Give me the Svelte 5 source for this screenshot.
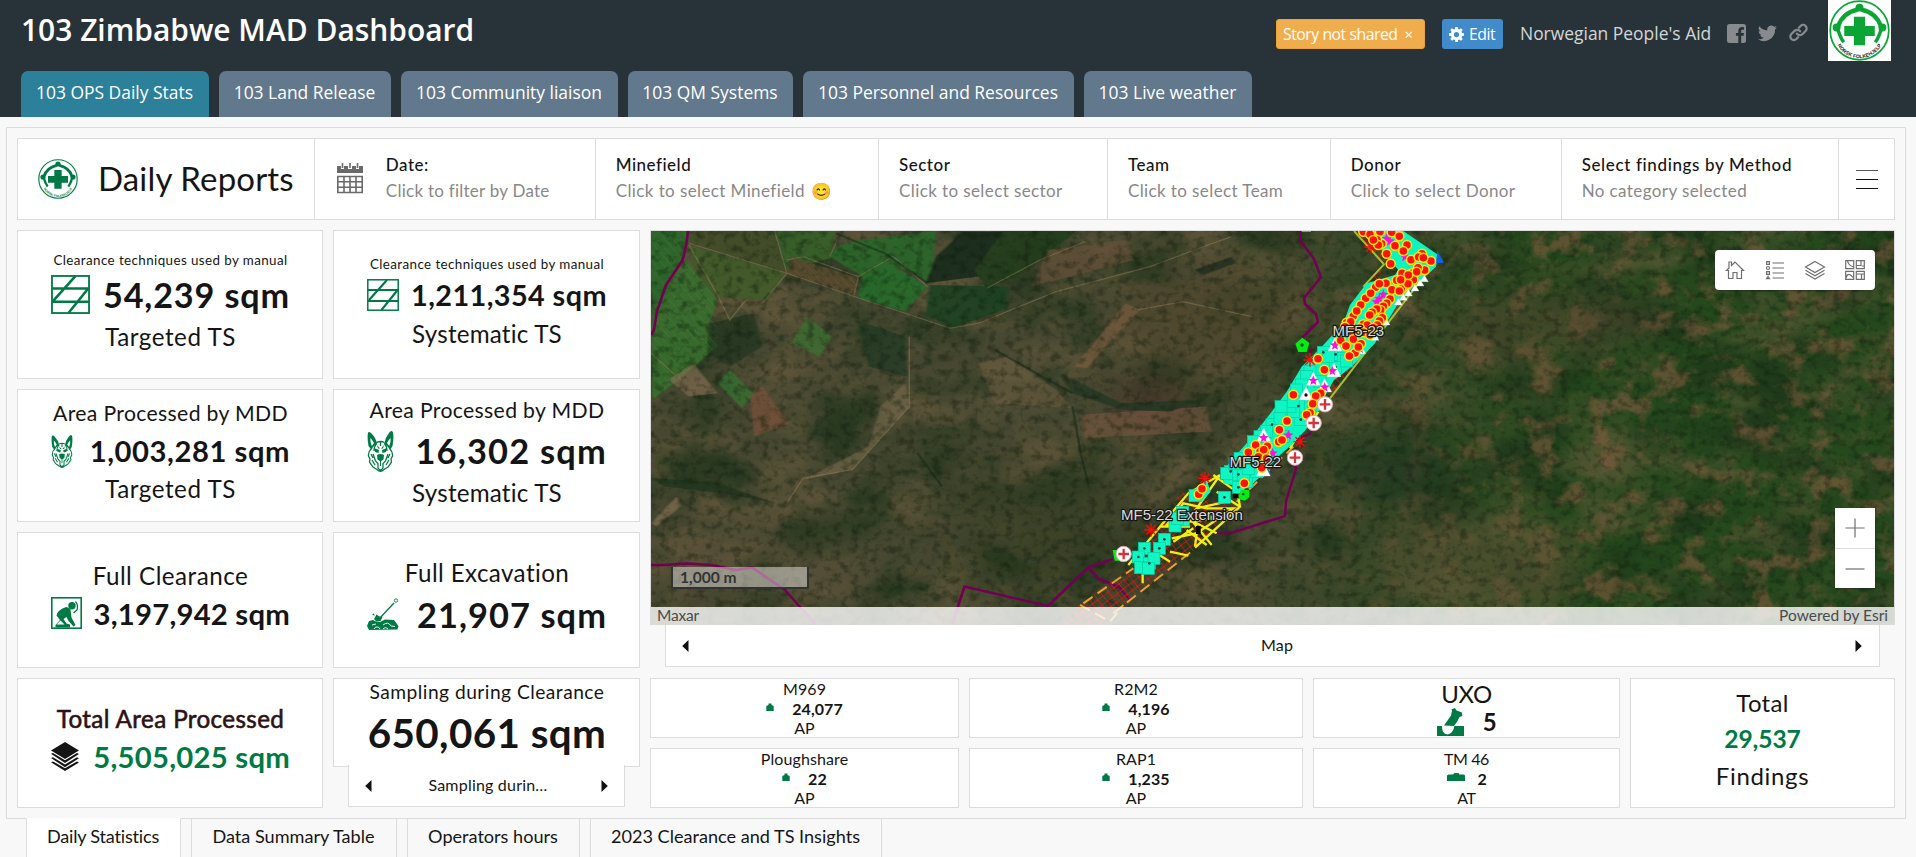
<script>
  const storyTabs = [
    { label: '103 OPS Daily Stats', w: 188, active: true },
    { label: '103 Land Release', w: 172 },
    { label: '103 Community liaison', w: 217 },
    { label: '103 QM Systems', w: 165 },
    { label: '103 Personnel and Resources', w: 271 },
    { label: '103 Live weather', w: 168 }
  ];

  const filters = [
    { name: 'Minefield', hint: 'Click to select Minefield', w: 283.5, emoji: true },
    { name: 'Sector', hint: 'Click to select sector', w: 229 },
    { name: 'Team', hint: 'Click to select Team', w: 223 },
    { name: 'Donor', hint: 'Click to select Donor', w: 231 },
    { name: 'Select findings by Method', hint: 'No category selected', w: 277 }
  ];

  // t: text, s: font size, ls: letter spacing, mt: space above
  const columns = [
    [
      { h: 149, icon: 'hatch', iw: 39, ih: 39, top: { t: 'Clearance techniques used by manual', s: 13.4, ls: 0.4, mt: 21 }, val: { t: '54,239 sqm', s: 34.2, ls: 0.85, mt: 6 }, bot: { t: 'Targeted TS', s: 24.2, ls: 0.54, mt: 6.5 } },
      { h: 133, icon: 'dog', iw: 22, ih: 34, top: { t: 'Area Processed by MDD', s: 21.2, ls: 0.34, mt: 11 }, val: { t: '1,003,281 sqm', s: 29.2, ls: 0.55, mt: 7 }, bot: { t: 'Targeted TS', s: 24.2, ls: 0.54, mt: 6 } },
      { h: 136, icon: 'kneel', iw: 31, ih: 32, top: { t: 'Full Clearance', s: 24.2, ls: 0.49, mt: 27.5 }, val: { t: '3,197,942 sqm', s: 29.3, ls: 0.2, mt: 6 } },
      { h: 130, icon: 'stack', iw: 28, ih: 29, tone: 'total', top: { t: 'Total Area Processed', s: 24.2, ls: 0.38, mt: 25 }, val: { t: '5,505,025 sqm', s: 29.3, ls: 0.22, mt: 5.5 } }
    ],
    [
      { h: 149, icon: 'hatch', iw: 32, ih: 32, top: { t: 'Clearance techniques used by manual', s: 13.4, ls: 0.4, mt: 25 }, val: { t: '1,211,354 sqm', s: 28.8, ls: 0.42, mt: 6 }, bot: { t: 'Systematic TS', s: 24.2, ls: 0.2, mt: 6 } },
      { h: 133, icon: 'dog', iw: 27, ih: 42, top: { t: 'Area Processed by MDD', s: 21.2, ls: 0.34, mt: 7.5 }, val: { t: '16,302 sqm', s: 34.4, ls: 1.2, mt: 7 }, bot: { t: 'Systematic TS', s: 24.2, ls: 0.2, mt: 7 } },
      { h: 136, icon: 'digger', iw: 32, ih: 32, top: { t: 'Full Excavation', s: 24.2, ls: 0.39, mt: 25 }, val: { t: '21,907 sqm', s: 34.4, ls: 1.05, mt: 6.5 } },
      { h: 89, top: { t: 'Sampling during Clearance', s: 19.2, ls: 0.48, mt: 1 }, val: { t: '650,061 sqm', s: 40.4, ls: 0.4, mt: 5.5 } }
    ]
  ];

  const mines = [
    { w: 309, items: [{ t: 'M969', v: '24,077', f: 'AP' }, { t: 'Ploughshare', v: '22', f: 'AP' }] },
    { w: 334, items: [{ t: 'R2M2', v: '4,196', f: 'AP' }, { t: 'RAP1', v: '1,235', f: 'AP' }] }
  ];

  const sheets = ['Data Summary Table', 'Operators hours', '2023 Clearance and TS Insights'];
  const sheetWidths = [206, 173, 292];

  const mineDots = [
    [850,20],[870,28],[900,20],[935,22],[958,34],[905,56],[891,44],[981,60],[920,86],[970,78],[1026,86],[932,116],[993,104],[1053,108],[945,62],
    [1034,135],[1014,128],[966,145],[996,145],[1000,164],[950,166],[918,175],[887,187],[936,194],[975,182],[964,192],[984,176],[958,198],[857,220],
    [872,205],[898,176],[842,240],[930,222],[920,235],[910,244],[902,255],[890,252],[876,262],[869,270],[820,273],[830,258],[907,278],[898,288],
    [800,293],[812,290],[850,298],[862,300],[840,310],[892,300],[880,308],[795,305],[815,322],[850,322],[870,330],[820,343],[782,346],[798,363],
    [843,356],[825,384],[808,393],[835,366],[714,401],[733,434],[640,509],[722,505],[707,513],[698,536],[690,563],[680,569],[621,588],[598,614],
    [596,650],[606,645],[562,664],[555,684],[527,660],[505,682],[540,680],[551,674],[535,695],[560,700],[545,728],[493,775],[356,808],[366,791],
    [1010,140],[985,150],[962,164],[1016,96],[1030,98],[895,60],[880,45]
  ];
  const plots = [
    [730,382],[767,388],[790,400],[767,427],[745,395],[655,543],[662,584],[640,560],[576,599],[600,580],[630,545],[452,739],[475,748],[440,745],
    [433,817],[475,787],[500,770],[490,750],[345,812],[308,862],[310,885],[285,903],[292,880],[253,943],[238,970],[193,970],[175,996],[208,1015],
    [222,1000],[182,1028],[205,1030],[603,545],[690,440],[680,455],[665,480],[650,495],[640,530],[560,620],[540,635],[520,650],[480,700],[465,715],
    [610,635],[560,690],[530,740],[505,730],[700,540],[720,470],[800,408]
  ];
  const plotDots = [[730,382],[767,388],[767,427],[655,543],[662,584],[576,599],[452,739],[475,748],[433,817],[475,787],[253,943],[238,970],[193,970],[175,996],[208,1015]];
  const stars = [[700,466],[734,486],[757,437],[551,638],[625,630],[578,684],[765,360],[920,40],[940,58],[930,48],[975,95],[910,208],[898,220],[890,230],[868,296],[840,370]];
  const triangles = [[700,466],[734,486],[762,440],[551,634],[678,510],[765,362],[550,738]];
  const slivers = [[985,205],[1005,190],[1020,175],[1033,162],[955,232],[970,218],[918,292],[885,338],[845,378]];
  const bursts = [[690,405],[660,650],[375,760],[213,915],[873,66]];
  const posts = [[735,538],[701,594],[645,698],[131,987]];
</script>

<svelte:head><title>103 Zimbabwe MAD Dashboard</title></svelte:head>

{#snippet emblem(size, color, caption)}
  <svg width={size} height={size} viewBox="0 0 60 60" fill="none">
    <circle cx="30" cy="30" r="28.8" fill="#fff" stroke={color} stroke-width="1.7" />
    <path d="M24.500 16.500h11v9h9.500v10h-9.500v9h-11v-9h-9.500v-10h9.500z" fill={color} />
    <path d="M14.500 41.500Q11 37 8.500 28" stroke={color} stroke-width="3.400" />
    <path d="M45.500 41.500Q49 37 51.500 28" stroke={color} stroke-width="3.400" />
    <path d="M9 26Q13 13 28 9.500M51 26Q47 13 32 9.500" stroke={color} stroke-width="4.200" />
    <circle cx="30" cy="7.500" r="3.900" fill={color} />
    <circle cx="7.500" cy="27" r="3.900" fill={color} />
    <circle cx="52.500" cy="27" r="3.900" fill={color} />
    <path id="rim-{size}" d="M6 38A24.600 24.600 0 0 0 54 38" />
    <text class="rim" fill={caption} font-size="5" text-anchor="middle"><textPath href="#rim-{size}" startOffset="50%">NORSK FOLKEHJELP</textPath></text>
  </svg>
{/snippet}

{#snippet glyph(kind, w, h)}
  {#if kind === 'hatch'}
    <svg width={w} height={h} viewBox="0 0 32 32" fill="none" stroke="#007a45">
      <rect x=".8" y=".8" width="30.400" height="30.400" stroke-width="1.500" />
      <path d="M1 11h30M1 22h30M20 1 2 21M31 10.500 14.500 31" stroke-width="2.100" />
    </svg>
  {:else if kind === 'dog'}
    <svg width={w} height={h} viewBox="0 0 27 42" fill="none" stroke="#007a45">
      <path d="M1 2.500Q2.500 1 4.500 3.500 9 8 10 13.500L6 17 4.500 20 1.500 16Q0 8 1 2.500zM26 2.500Q24.500-.500 22 3 18 8 17.300 13.500L21 17 23 20 25.500 16Q27 8 26 2.500z" fill="#007a45" stroke="none" />
      <path d="M3.400 8Q3 12 4.800 16L7 13Q5.500 10 3.400 8zM23.600 8Q24 12 22.300 16L20 13Q21.500 10 23.600 8z" fill="#fff" stroke="none" />
      <path d="M9.500 12.500Q13.500 10.500 17.500 12.500M4 19Q1 22 1.500 26L3 29 2.500 32 6 37 10 39.500Q13.500 43 17 39.500L21 37 24.500 32 24 29 25.500 26Q26 22 23 19M10 13.500Q7 16 7 21M17.300 13.500Q20 16 20 21M6 24 8.500 31 11 33.500V38Q13.500 42 16 38V33.500L18.500 31 21 24M5 30 8 35M22 30 19 35M13.500 12V16M4 24l2 4M23 24l-2 4" stroke-width="1.300" />
      <path d="M7 18 12 20 11.500 23 8 22zM20 18 15 20 15.500 23 19 22zM10 25Q13.500 23 17 25L16.500 29.500 13.500 31.500 10.500 29.500zM10 15 13 18.500 11 18.500zM17 15 14 18.500 16 18.500z" fill="#007a45" stroke="none" />
      <path d="M13.500 31v5" stroke-width="1" />
    </svg>
  {:else if kind === 'kneel'}
    <svg width={w} height={h} viewBox="0 0 31 32" fill="none">
      <rect x=".8" y=".8" width="29.400" height="30.400" stroke="#007a45" stroke-width="1.600" />
      <circle cx="21" cy="8.700" r="3.700" fill="#007a45" />
      <path d="M15 10Q18 10 19.500 12.500L20.500 20.500 24.500 28 22.500 29.500 17.500 24 15.500 20 12.500 22 15.500 26.500 19 27.500V30.500H4.500V28L9 23 5.500 18.500Q6 13.500 15 10z" fill="#007a45" />
      <path d="M24.500 4.500Q27.500 8 26 13L22.500 16" stroke="#007a45" stroke-width="1.300" />
      <path d="M5.500 27.500 9.500 23.500 13.500 27.500z" fill="#fff" />
    </svg>
  {:else if kind === 'digger'}
    <svg width={w} height={h} viewBox="0 0 32 32" fill="none">
      <path d="M0 28 2 23 6 22 9 23.500 13 24 18 21.500 27 22 31.500 28 30.500 31.500 2 32z" fill="#007a45" />
      <path d="M7 31a3.200 3.200 0 0 1 6 0M16 31a3.200 3.200 0 0 1 5 0M16 27q5-4 8 1l4 .5M5 27l4-1" stroke="#fff" stroke-width=".9" />
      <path d="M12 21 27 5" stroke="#007a45" stroke-width="1.300" />
      <circle cx="29" cy="2.500" r="1.700" stroke="#007a45" stroke-width=".9" />
      <path d="M7 21l2.500-4.500 3 2 3 .500-2 4-4 .500zM5 17l1.500-1.500 1.500 2z" fill="#007a45" />
    </svg>
  {:else if kind === 'stack'}
    <svg width={w} height={h} viewBox="0 0 28 29" fill="#151515">
      <path d="M14 0 28 8.500 14 17 0 8.500z" />
      <path d="M0 11.800 2 11 14 18.300 26 11 28 12 14 21zM0 16 2 15.200 14 22.500 26 15.200 28 16.200 14 25.200zM0 20.200 2 19.400 14 26.300 26 19.400 28 20.400 14 29z" />
    </svg>
  {/if}
{/snippet}

{#snippet arrow(right)}
  <svg width="7" height="12" viewBox="0 0 7 12"><path d={right ? 'M.5 0 6.800 6 .500 12z' : 'M6.500 0 .200 6l6.300 6z'} fill="#111" /></svg>
{/snippet}

{#snippet stat(c)}
  <article class="card" class:total={c.tone === 'total'} style:height="{c.h}px">
    <div class="line" style:font-size="{c.top.s}px" style:letter-spacing="{c.top.ls}px" style:margin-top="{c.top.mt}px">{c.top.t}</div>
    <div class="value" class:only={!c.icon} style:font-size="{c.val.s}px" style:letter-spacing="{c.val.ls}px" style:margin-top="{c.val.mt}px">
      {#if c.icon}<span class="icon">{@render glyph(c.icon, c.iw, c.ih)}</span>{/if}
      <strong>{c.val.t}</strong>
    </div>
    {#if c.bot}<div class="line" style:font-size="{c.bot.s}px" style:letter-spacing="{c.bot.ls}px" style:margin-top="{c.bot.mt}px">{c.bot.t}</div>{/if}
  </article>
{/snippet}

<div class="page">
  <header>
    <div class="brand">
      <h1>103 Zimbabwe MAD Dashboard</h1>
      <div class="tools">
        <span class="btn warn">Story not shared <i>×</i></span>
        <span class="btn edit">
          <svg width="15" height="15" viewBox="0 0 16 16"><path fill="#fff" fill-rule="evenodd" d="M6.700 0h2.600l.4 2.100 1.300.6L12.800 1.400l1.800 1.800-1.300 1.800.6 1.300 2.100.4v2.600l-2.100.4-.6 1.300 1.300 1.800-1.800 1.800-1.800-1.300-1.300.6L9.300 16H6.700l-.4-2.100L5 13.300l-1.800 1.300-1.800-1.800L2.700 11l-.6-1.300L0 9.300V6.700l2.100-.4L2.700 5 1.400 3.200l1.800-1.800L5 2.700l1.300-.6zM8 5.200a2.800 2.800 0 1 0 0 5.600 2.800 2.800 0 0 0 0-5.600z" /></svg>
          Edit
        </span>
        <span class="org">Norwegian People's Aid</span>
        <svg width="19" height="19" viewBox="0 0 19 19"><path fill="#878b8e" fill-rule="evenodd" d="M2.500 0h14A2.500 2.500 0 0 1 19 2.500v14a2.500 2.500 0 0 1-2.500 2.500h-2.300v-7.300h2.400l.4-2.800h-2.800V7.200c0-.9.300-1.400 1.500-1.400H17V3.300C16.700 3.200 15.800 3.100 15 3.100c-2.300 0-3.700 1.400-3.700 3.800v2H8.900v2.800h2.400V19H2.500A2.500 2.500 0 0 1 0 16.500v-14A2.500 2.500 0 0 1 2.500 0z" /></svg>
        <svg class="bird" width="19" height="17" viewBox="0 0 24 20"><path fill="#878b8e" d="M24 2.300a9.800 9.800 0 0 1-2.800.8A4.900 4.900 0 0 0 23.300.4a9.900 9.900 0 0 1-3.100 1.200 4.900 4.900 0 0 0-8.400 4.500A14 14 0 0 1 1.700.9a4.900 4.900 0 0 0 1.500 6.600 4.900 4.900 0 0 1-2.200-.6 4.900 4.900 0 0 0 3.900 4.900 5 5 0 0 1-2.200.1 4.900 4.900 0 0 0 4.600 3.400A9.900 9.900 0 0 1 0 17.300a14 14 0 0 0 21.500-12.400A10 10 0 0 0 24 2.300z" /></svg>
        <svg class="chain" width="19" height="19" viewBox="0 0 24 24" fill="none" stroke="#878b8e" stroke-width="2.800" stroke-linecap="round"><path d="M10 13.500a5 5 0 0 0 7 .5l4-4a4.400 4.400 0 0 0-6.300-6.300L12.500 6M14 10.500a5 5 0 0 0-7-.5l-4 4a4.400 4.400 0 0 0 6.300 6.300L11.500 18" /></svg>
        <span class="logo">{@render emblem(61, '#0aa534', '#222')}</span>
      </div>
    </div>
    <nav>
      {#each storyTabs as tab}
        <a class:active={tab.active} style:width="{tab.w}px">{tab.label}</a>
      {/each}
    </nav>
  </header>

  <div class="frame">
    <section class="filters">
      <div class="heading">
        {@render emblem(40, '#007a45', '#007a45')}
        <h2>Daily Reports</h2>
      </div>
      <div class="filter date">
        <svg width="26" height="31" viewBox="0 0 26 31" fill="none">
          <path d="M0 10V3h4v3h3V3h4v3h4V3h4v3h3V3h4v7z" fill="#6a6a6a" />
          <path d="M5.500 0v5M13 0v5M20.500 0v5" stroke="#6a6a6a" stroke-width="1.600" />
          <path d="M.8 13.500h24.400v16H.8zM.8 18.800h24.400M.8 24.200h24.400M7 13.500v16M13 13.500v16M19 13.500v16" stroke="#6a6a6a" stroke-width="1.600" />
        </svg>
        <div><b>Date:</b><p class="tight">Click to filter by Date</p></div>
      </div>
      {#each filters as f}
        <div class="filter" style:width="{f.w}px">
          <div><b class:wide={f.name.length > 12}>{f.name}</b><p>{f.hint}{#if f.emoji}<span class="emoji">😊</span>{/if}</p></div>
        </div>
      {/each}
      <div class="burger"><i></i><i></i><i></i></div>
    </section>

    <div class="body">
      <div class="col one">
        {#each columns[0] as c}{@render stat(c)}{/each}
      </div>
      <div class="col two">
        {#each columns[1] as c}{@render stat(c)}{/each}
        <div class="pager small">{@render arrow(false)}<span>Sampling durin…</span>{@render arrow(true)}</div>
      </div>

      <div class="wide-col">
        <div class="map">
          <svg class="terrain" width="1243" height="394" viewBox="0 0 1243 394">
            <defs>
              <filter id="soft" x="-5%" y="-5%" width="110%" height="110%"><feGaussianBlur stdDeviation="2" /></filter>
              <filter id="blur" x="-20%" y="-20%" width="140%" height="140%"><feGaussianBlur stdDeviation="16" /></filter>
              <filter id="earth" x="0" y="0" width="100%" height="100%" color-interpolation-filters="sRGB">
                <feTurbulence type="fractalNoise" baseFrequency=".012 .02" numOctaves="7" seed="11" />
                <feColorMatrix values="0 0 0 0 .45  0 0 0 0 .38  0 0 0 0 .26  3 0 0 0 -1.300" />
              </filter>
              <filter id="shrub" x="0" y="0" width="100%" height="100%" color-interpolation-filters="sRGB">
                <feTurbulence type="fractalNoise" baseFrequency=".012 .018" numOctaves="7" seed="4" />
                <feColorMatrix values="0 0 0 0 .11  0 0 0 0 .20  0 0 0 0 .10  0 3.600 0 0 -1.650" />
              </filter>
              <filter id="patch" x="0" y="0" width="100%" height="100%" color-interpolation-filters="sRGB">
                <feTurbulence type="fractalNoise" baseFrequency=".032 .038" numOctaves="6" seed="23" />
                <feColorMatrix values="0 0 0 0 .50  0 0 0 0 .36  0 0 0 0 .25  0 0 5 0 -2.600" />
              </filter>
              <filter id="grain" x="0" y="0" width="100%" height="100%" color-interpolation-filters="sRGB">
                <feTurbulence type="fractalNoise" baseFrequency=".11 .13" numOctaves="5" seed="7" />
                <feColorMatrix values="0 0 0 0 .04  0 0 0 0 .09  0 0 0 0 .03  0 3 0 0 -1.400" />
              </filter>
              <linearGradient id="east"><stop offset=".45" stop-color="#fff" stop-opacity="0" /><stop offset=".72" stop-color="#fff" /></linearGradient>
              <mask id="east-only"><rect width="1243" height="394" fill="url(#east)" /></mask>
              <pattern id="net" width="28" height="28" patternUnits="userSpaceOnUse" patternTransform="rotate(8)"><path d="M0 0 28 28M28 0 0 28" stroke="#e5160f" stroke-width="2.600" /></pattern>
              <pattern id="rows" width="16" height="16" patternUnits="userSpaceOnUse" patternTransform="rotate(-35)"><path d="M0 0V16" stroke="#7f9a55" stroke-opacity=".4" stroke-width="1.500" /></pattern>
            </defs>

            <rect width="1243" height="394" fill="#474831" />
            <rect width="1243" height="394" fill="#20491a" opacity=".85" mask="url(#east-only)" />
            <rect width="1243" height="394" filter="url(#earth)" opacity=".5" />
            <rect width="1243" height="394" filter="url(#shrub)" opacity=".65" />
            <g mask="url(#east-only)"><rect width="1243" height="394" filter="url(#patch)" opacity=".6" /></g>
            <g filter="url(#blur)" opacity=".6">
              <ellipse cx="740" cy="240" rx="60" ry="30" fill="#16301a" />
              <ellipse cx="390" cy="270" rx="110" ry="26" fill="#303c22" />
              <ellipse cx="420" cy="325" rx="120" ry="22" fill="#1b3319" />
              <ellipse cx="830" cy="330" rx="110" ry="45" fill="#5c5436" />
              <ellipse cx="560" cy="90" rx="90" ry="50" fill="#54492f" />
              <ellipse cx="900" cy="90" rx="110" ry="26" fill="#574a31" />
              <ellipse cx="500" cy="170" rx="40" ry="24" fill="#4a2e28" />
              <ellipse cx="100" cy="340" rx="120" ry="26" fill="#64543c" />
            </g>

            <g transform="translate(-11 -11) scale(.408 .333)" filter="url(#soft)" opacity=".88">
              <path d="M27 33H120L100 120 60 200 30 345z" fill="#2c6a2c" />
              <path d="M27 345 60 210 115 120 190 240 170 310 190 380 95 480 30 540z" fill="#37702f" />
              <path d="M120 75 360 160 310 240 180 230 130 130z" fill="#435c2c" />
              <path d="M125 33H330L360 160 120 70z" fill="#44502b" />
              <path d="M330 33H480L465 115 360 150z" fill="#37622b" />
              <path d="M465 110 480 80 540 60 725 33 715 190 600 120 545 170z" fill="#2c6829" />
              <path d="M545 170 600 120 705 200 650 275 535 235z" fill="#266d2b" />
              <path d="M370 110 535 175 525 222 360 162z" fill="#584a2f" />
              <path d="M725 110 790 35H890L830 170 700 190z" fill="#182c1a" />
              <path d="M890 33H1070L940 160 850 205 820 150z" fill="#213d1e" />
              <path d="M710 195 900 200 900 265 770 325 700 285z" fill="#1d4323" />
            </g>
            <g transform="translate(-11 -11) scale(.408 .333)" filter="url(#soft)" opacity=".65">
              <path d="M1065 440 1190 250 1225 270 1095 445z" fill="#7b5d43" />
              <path d="M830 430 900 410 1020 510 1060 565 870 550z" fill="#6b5b40" />
              <path d="M1080 585 1390 560 1400 635 1090 655z" fill="#745741" />
              <path d="M1000 90 1190 60 1210 120 960 200z" fill="#69513a" />
              <path d="M370 370 410 290 470 350 440 410z" fill="#3b7830" />
              <path d="M190 490 220 450 278 520 250 565z" fill="#347a30" />
              <path d="M270 530 300 500 365 610 280 650z" fill="#80523c" />
              <path d="M170 310 280 280 300 380 220 440 165 400z" fill="#1d331d" />
              <path d="M530 300 650 350 655 470 560 440z" fill="#1d3820" />
              <path d="M70 480 130 430 190 520 120 530z" fill="#856e52" />
              <path d="M590 560 650 490 660 560 520 750 400 780 560 680z" fill="#74684b" />
              <path d="M1030 460 1180 550 1380 540 1300 575 1180 570 1060 520z" fill="#1d3620" />
              <path d="M1360 150 1450 110 1460 130 1380 165z" fill="#16281a" />
              <path d="M27 775 190 790 330 850 200 820 60 800z" fill="#1c301c" />
              <path d="M27 910 90 830 100 860 40 920z" fill="#8a7156" />
            </g>
            <g transform="translate(-11 -11) scale(.408 .333)" fill="none">
              <path d="M27 33H120L100 120 60 200 30 345zM27 345 115 120 190 240 190 380 95 480 30 540zM370 110 535 175 525 222 360 162z" fill="url(#rows)" />
              <path d="M120 70 360 160 550 240 650 280 760 325 830 310 1020 215 1250 140 1370 85 1450 50M850 205 980 120 1090 65M330 33 360 160 300 250M360 120 400 110 535 170 525 225M465 110 480 70M535 170 620 110 705 200M660 350 660 560 520 750 400 775 360 850M1220 270 1330 245 1500 290M120 75 190 225 220 300 260 240M27 400 100 480" stroke="#94825c" stroke-opacity=".45" stroke-width="3.500" />
              <path d="M1060 560 1080 700 1100 800M870 390 1000 480 1060 520M480 40 600 100 705 190M680 700 740 800" stroke="#16291a" stroke-opacity=".55" stroke-width="6" />
            </g>
            <rect width="1243" height="394" filter="url(#grain)" opacity=".38" />

            <g fill="none" stroke="#720052" stroke-linejoin="round">
              <path d="M37 0Q35 20 31 30L15 54 6 80 3 99 0 104" stroke-width="2.500" />
              <path d="M0 334H13L36 332.500 60 334 85 339 101 336.500 134 359 165 394M301 394 313.500 355.500 397 375 437 336.500 462 328M437 336.500 448 348 468 356 480 369.500" stroke-width="2.600" />
              <path d="M650 0 649 9 663 28 670 46 653 67 654 73 665 83 667 91 651 107M660 118 659 122M562 302 580 302 634 285 635 270 645 238 643 224M660 202 645 210" stroke-width="2.500" />
            </g>

            <g transform="translate(429 -6) scale(.33333)">
              <path d="M150 1030 0 1140-70 1200H60L130 1140 340 980 480 850 300 800 240 905z" fill="url(#net)" />
              <path d="M820 18 910 120 960 20zM910 120 850 190 900 180zM760 520 1000 180 800 380 740 470z" fill="url(#net)" />
              <path d="M0 1140 90 1190 130 1140M10 1135 160 1030M100 1165 340 975M470 830 640 665" fill="none" stroke="#e8a12e" stroke-width="6" stroke-dasharray="34 18" />
              <path d="M822 18 912 118 850 185M1050 130 750 520" fill="none" stroke="#aabd2f" stroke-width="6" />
              <path d="M145 1020 240 905 325 805 420 750M345 968 480 845 470 790M188 1040V1075M230 985 270 1010M270 980 325 992M275 940 350 925 345 965M350 925 460 850 380 850 310 835 260 900 400 880M400 750 470 800M330 880 395 960M300 870 410 925M420 750 350 850 440 830M320 915 380 960M410 800 480 845M280 950 340 910M240 905H330M350 870 430 880M660 620 630 670M715 560 690 600" fill="none" stroke="#f2ee10" stroke-width="7" />
              <path d="M855 18H970L1075 90 1068 125 1035 155 1000 185 955 235 915 300 885 355 820 420 790 445 762 465 720 540 690 600 640 655 600 690 540 755 505 790 430 775 430 735 500 655 560 580 620 500 665 425 730 360 790 295 810 240 860 175 945 150 955 135 900 70z" fill="#0df5bf" />
              <path d="M348 788 380 765 392 800 365 830 335 825z" fill="#0df5bf" />
              {#each plots as [x, y]}<rect x={x - 18} y={y - 18} width="36" height="36" fill="#10f5c4" stroke="#00cfa4" stroke-width="2" />{/each}
              {#each plotDots as [x, y]}<circle cx={x} cy={y} r="4" fill="#003c38" />{/each}
              <path d="M1072 78 1092 113 1068 115zM530 748h44l-8-14z" fill="#1560e8" />
              {#each slivers as [x, y]}<path d="M{x} {y - 12}L{x + 12} {y + 8}H{x - 12}z" fill="#fff" stroke="#ddd" stroke-width="1" />{/each}
              {#each triangles as [x, y]}<path d="M{x} {y - 25}L{x + 21} {y + 15}H{x - 21}z" fill="#fff" stroke="#e7e7e7" stroke-width="1" />{/each}
              <circle cx="678" cy="510" r="5" fill="#111" />
              {#each stars as [x, y]}<path transform="translate({x} {y})" d="M0-15 4-5 15-4 6 3 9 14 0 8-9 14-6 3-15-4-4-5z" fill="#ff10d8" />{/each}
              <path d="M646 356 667 338 688 354 680 381H655zM665 12h28v9h-28zM482 795h26v22l-14 10-20-6zM98 975h20v32h-14z" fill="#00ee10" />
              <circle cx="666" cy="360" r="5" fill="#042" /><circle cx="490" cy="807" r="4" fill="#042" />
              <path d="M460 806h16v14h-16zM348 903h14v24h-14z" fill="#0a0a00" />
              {#each bursts as [x, y]}<path transform="translate({x} {y})" d="M-20 0H20M0-20V20M-14-14 14 14M14-14-14 14" stroke="#ff0a05" stroke-width="4" />{/each}
              {#each mineDots as [x, y]}<circle cx={x} cy={y} r="13.500" fill="#f11" stroke="#ffe800" stroke-width="4.500" />{/each}
              {#each posts as [x, y]}
                <circle cx={x} cy={y} r="23" fill="#fff" stroke="#d9a0a4" stroke-width="3" />
                <path d="M{x - 16} {y}h32M{x} {y - 16}v32" stroke="#d2333c" stroke-width="7" />
              {/each}
            </g>

            <g class="places">
              <text x="681.500" y="105">MF5-23</text>
              <text x="578.500" y="236">MF5-22</text>
              <text x="470" y="289">MF5-22 Extension</text>
            </g>
          </svg>

          <div class="toolbar">
            <svg width="20" height="20" viewBox="0 0 20 20"><path d="M1.500 10.500 4 8V2h2.500v3.500L10 2l8.500 8.500H16.500V18.500H12V12.500H8v6H3.500v-8z" /></svg>
            <svg width="20" height="20" viewBox="0 0 20 20"><path d="M7.500 3H19M7.500 8H19M7.500 13H19M7.500 18H19M1.600 1.600h2.800v2.800H1.600zM1.600 11.600h2.800v2.800H1.600zM1.500 18.700 3 16.300l1.500 2.400z" /><circle cx="3" cy="8" r="1.500" /></svg>
            <svg width="22" height="20" viewBox="0 0 22 20"><path d="M11 1.500 20.500 7 11 12.500 1.500 7zM1.500 10.300 11 15.800l9.500-5.500M1.500 13.500 11 19l9.500-5.500" /></svg>
            <svg width="20" height="20" viewBox="0 0 20 20"><path d="M.7.700h8v8h-8zM11.300.700h8v8h-8zM.7 11.300h8v8h-8zM11.300 11.300h8v8h-8zM2.500.700Q3 5 8.500 7M12 5.500h4V1M1 18Q3 11 8 17.500M12 14h4.500v5M16.500 14h2.500M17 6h2" /></svg>
          </div>
          <div class="zoom"><i><svg width="20" height="20" viewBox="0 0 20 20"><path d="M.5 10h19M10 .500v19" /></svg></i><i><svg width="20" height="20" viewBox="0 0 20 20"><path d="M.5 10h19" /></svg></i></div>
          <div class="scale">1,000 m</div>
          <div class="credit"><span class="maxar">Maxar</span><span>Powered by Esri</span></div>
        </div>
        <div class="pager big">{@render arrow(false)}<span>Map</span>{@render arrow(true)}</div>

        <div class="finds">
          {#each mines as group}
            <div class="pair" style:width="{group.w}px">
              {#each group.items as m}
                <article class="mini">
                  <div>{m.t}</div>
                  <div class="row"><svg width="8" height="8" viewBox="0 0 8 8"><path d="M2.500.500h3V2L7.700 3v5H.3V3L2.500 2z" fill="#007a45" /></svg><strong>{m.v}</strong></div>
                  <div>{m.f}</div>
                </article>
              {/each}
            </div>
          {/each}
          <div class="pair uxo-col">
            <article class="mini uxo">
              <div>UXO</div>
              <div class="row">
                <svg width="27" height="28" viewBox="0 0 27 28"><path d="M0 18H27V28H0z" fill="#007a45" /><path d="M4.500 17.500H17.500Q16.500 25 10.500 26.500 5 26 5 18.500z" fill="#fff" /><path d="M7 17.500 14 7.500 15 3 14.500 1.500 18 0 19.500 2.500 25 4.500 25.300 8 22.500 9 20.500 13 17 18z" fill="#007a45" /></svg>
                <strong>5</strong>
              </div>
            </article>
            <article class="mini tm">
              <div>TM 46</div>
              <div class="row"><svg width="18" height="8" viewBox="0 0 18 8"><path d="M0 2.500 1.500 1.500H6L7.500 0h4L12.500 1.500H17l1 1V8H0z" fill="#007a45" /></svg><strong>2</strong></div>
              <div>AT</div>
            </article>
          </div>
          <article class="sum"><div>Total</div><strong>29,537</strong><div class="f">Findings</div></article>
        </div>
      </div>
    </div>
  </div>

  <footer>
    <a class="on">Daily Statistics</a>
    {#each sheets as s, i}<a style:width="{sheetWidths[i]}px">{s}</a>{/each}
  </footer>
</div>

<style>
  :global(body) { margin: 0; overflow: hidden; }
  .page { width: 1916px; height: 857px; overflow: hidden; background: #f8f8f8; color: #151515; font-family: Lato, sans-serif; }
  .page * { box-sizing: border-box; }
  svg { display: block; flex: none; }
  strong { font-weight: 700; }

  header { height: 117px; background: #283339; font-family: 'Open Sans', sans-serif; display: flex; flex-direction: column; justify-content: space-between; }
  .brand { display: flex; justify-content: space-between; height: 61px; }
  h1 { margin: 9px 0 0 21px; font-size: 29.950px; line-height: 42px; font-weight: 600; color: #fff; white-space: nowrap; }
  .tools { display: flex; margin-right: 25px; }
  .btn { height: 30px; margin-top: 19px; border-radius: 3px; color: #fff; font-size: 15.800px; letter-spacing: -.48px; line-height: 29px; display: flex; align-items: center; white-space: nowrap; }
  .warn { width: 149px; background: #f0ad4e; border: 1px solid #eea236; padding-left: 6px; }
  .warn i { font-style: normal; font-size: 15px; margin-left: 7px; }
  .edit { width: 61px; margin-left: 17px; background: #428bca; padding-left: 7px; gap: 5px; }
  .org { width: 191px; margin: 21px 16px 0 17px; color: #d4d6d7; font-size: 17.450px; line-height: 25px; white-space: nowrap; }
  .tools > svg { margin-top: 23.500px; }
  .tools > .bird { margin: 24.500px 12px 0; }
  .tools > .chain { margin-top: 22.500px; }
  .logo { width: 63px; height: 61px; background: #fff; margin-left: 20px; padding-left: 1px; }
  .rim { font-family: 'Liberation Sans', sans-serif; font-weight: 700; }

  nav { display: flex; gap: 10px; padding-left: 21px; }
  nav a { height: 46px; border-radius: 7px 7px 0 0; background: #62788c; color: #fff; font-size: 17.450px; line-height: 43px; text-align: center; white-space: nowrap; padding-right: 1px; }
  nav a.active { background: #2d8099; }

  .frame { width: 1900px; height: 692px; margin: 10px 0 0 6px; border: 1px solid #dcdcdc; padding: 10px; }
  .filters { display: flex; width: 1878px; height: 82px; border: 1px solid #dcdcdc; background: #fff; }
  .filters > * + * { border-left: 1px solid #dcdcdc; }
  .heading { width: 296px; display: flex; align-items: center; padding-left: 20px; gap: 20px; }
  h2 { margin: -3px 0 0; font-size: 33px; letter-spacing: .15px; line-height: 40px; font-weight: 400; white-space: nowrap; }
  .filter { padding: 13px 0 0 20px; white-space: nowrap; }
  .filter b, .filter p { display: block; margin: 0; font-size: 17px; line-height: 26px; letter-spacing: .5px; font-weight: 500; }
  .filter b.wide { letter-spacing: .63px; }
  .filter p { font-weight: 400; color: #888; letter-spacing: .4px; }
  .filter p.tight { letter-spacing: .25px; }
  .date { display: flex; width: 281px; padding-left: 22px; gap: 23px; }
  .date svg { margin-top: 11px; }
  .emoji { display: inline-block; margin-left: 6px; font-size: 16.500px; line-height: 16px; letter-spacing: 0; }
  .burger { width: 56.500px; padding: 31px 0 0 17px; display: flex; flex-direction: column; gap: 8px; }
  .burger i { width: 22px; height: 1px; background: #111; }
  .burger i:first-child { background: #555; }

  .body { display: flex; gap: 10px; margin-top: 10px; }
  .col { display: flex; flex-direction: column; gap: 10px; }
  .one { width: 306px; }
  .two { width: 307px; }
  .card { border: 1px solid #dcdcdc; background: #fff; padding: 0 32px 0 33px; display: flex; flex-direction: column; flex: none; }
  .line { text-align: center; line-height: 1.200; white-space: nowrap; display: flex; justify-content: center; }
  .value { display: flex; align-items: center; justify-content: space-between; line-height: 1.200; white-space: nowrap; height: 1.200em; }
  .value.only { justify-content: center; }
  .icon { letter-spacing: 0; }
  .total .line { color: #2c1214; -webkit-text-stroke: .6px #2c1214; }
  .total strong { color: #007a45; }

  .pager { background: #fff; border: 1px solid #dcdcdc; border-top: 0; display: flex; align-items: center; justify-content: space-between; font-size: 16px; letter-spacing: .2px; flex: none; }
  .pager span { padding-left: 3px; margin-top: -3px; }
  .small { width: 277px; height: 42px; margin: -12px 0 0 15px; padding: 0 16px; z-index: 1; }
  .big { width: 1215px; height: 42px; margin-left: 15px; padding: 0 17px 0 16px; }
  .big span { padding-left: 10px; }

  .wide-col { width: 1245px; }
  .map { position: relative; width: 1245px; height: 395px; border: 1px solid #dcdcdc; border-bottom: 0; overflow: hidden; }
  .places text { font: 15px 'Liberation Sans', sans-serif; fill: #dadada; stroke: #141414; stroke-width: 2.400px; paint-order: stroke; stroke-linejoin: round; }
  .toolbar { position: absolute; right: 19px; top: 19px; width: 160px; height: 40px; border-radius: 4px; background: #fff; display: grid; grid-template-columns: repeat(4, 40px); place-items: center; box-shadow: 0 1px 2px rgba(0,0,0,.3); }
  .toolbar svg, .zoom svg { fill: none; stroke: #6e6e6e; stroke-width: 1.200px; }
  .zoom { position: absolute; right: 19px; top: 277px; width: 40px; height: 80px; background: #fff; box-shadow: 0 1px 2px rgba(0,0,0,.3); }
  .zoom i { display: grid; place-items: center; height: 40px; }
  .zoom i + i { border-top: 1px solid #ddd; }
  .scale { position: absolute; left: 20px; top: 336px; width: 138px; height: 22px; border: 2px solid #323232; border-top: 0; background: rgba(255,255,255,.42); font-size: 15.600px; line-height: 21px; font-weight: 700; color: #333; padding-left: 7px; white-space: nowrap; }
  .credit { position: absolute; left: 0; right: 0; bottom: 0; height: 18px; background: rgba(255,255,255,.8); color: #4a4a4a; font-size: 15.500px; line-height: 17px; display: flex; justify-content: space-between; padding: 0 6px; }
  .credit .maxar { letter-spacing: -.2px; }

  .finds { display: flex; gap: 10px; margin-top: 11px; }
  .pair { display: flex; flex-direction: column; gap: 10px; }
  .uxo-col { width: 307px; }
  .mini { height: 60px; border: 1px solid #dcdcdc; background: #fff; text-align: center; font-size: 16px; line-height: 19.500px; overflow: hidden; letter-spacing: .1px; }
  .row { display: flex; justify-content: center; align-items: center; gap: 18px; }
  .row svg { margin-bottom: 2px; }
  .tm .row { gap: 13px; }
  .tm { letter-spacing: -.4px; }
  .uxo { font-size: 24px; line-height: 28px; letter-spacing: -.4px; padding-top: 1px; }
  .uxo .row { gap: 19px; }
  .uxo .row svg { margin-bottom: 0; }
  .sum { width: 265px; height: 130px; border: 1px solid #dcdcdc; background: #fff; text-align: center; font-size: 24px; line-height: 36.400px; padding-top: 6px; }
  .sum div { letter-spacing: .29px; }
  .sum div.f { letter-spacing: .65px; }
  .sum strong { display: block; font-size: 24.600px; letter-spacing: -.1px; color: #007a45; }

  footer { display: flex; gap: 10px; padding-left: 26px; margin-top: -1px; position: relative; }
  footer a { height: 40px; border: 1px solid #dcdcdc; border-bottom: 0; padding-right: 1px; font-size: 18.100px; line-height: 35px; text-align: center; white-space: nowrap; }
  footer a.on { width: 155px; background: #fff; border-top-color: #fff; letter-spacing: -.2px; }
</style>
